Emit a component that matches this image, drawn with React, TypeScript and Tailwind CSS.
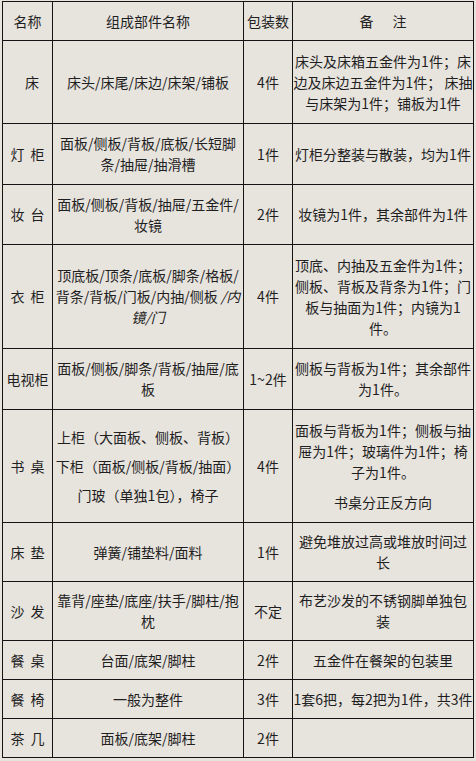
import React from "react";

type Row = {
  name: string;
  namePad?: boolean;
  parts: React.ReactNode[];
  partsGap?: boolean;
  count: string;
  notes: React.ReactNode[];
  notesExtra?: string;
};

const rows: Row[] = [
  {
    name: "床",
    namePad: true,
    parts: ["床头/床尾/床边/床架/铺板"],
    count: "4件",
    notes: ["床头及床箱五金件为1件；床", "边及床边五金件为1件； 床抽", "与床架为1件；铺板为1件"],
  },
  {
    name: "灯 柜",
    parts: ["面板/侧板/背板/底板/长短脚", "条/抽屉/抽滑槽"],
    count: "1件",
    notes: ["灯柜分整装与散装，均为1件"],
  },
  {
    name: "妆 台",
    parts: ["面板/侧板/背板/抽屉/五金件/", "妆镜"],
    count: "2件",
    notes: ["妆镜为1件，其余部件为1件"],
  },
  {
    name: "衣 柜",
    parts: [
      "顶底板/顶条/底板/脚条/格板/",
      <>
        背条/背板/门板/内抽/侧板 <i>/内</i>
      </>,
      <i>镜/门</i>,
    ],
    count: "4件",
    notes: ["顶底、内抽及五金件为1件；", "侧板、背板及背条为1件；门", "板与抽面为1件；内镜为1", "件。"],
  },
  {
    name: "电视柜",
    parts: ["面板/侧板/脚条/背板/抽屉/底", "板"],
    count: "1~2件",
    notes: ["侧板与背板为1件；其余部件", "为1件。"],
  },
  {
    name: "书 桌",
    parts: ["上柜（大面板、侧板、背板）", "下柜（面板/侧板/背板/抽面）", "门玻（单独1包），椅子"],
    partsGap: true,
    count: "4件",
    notes: ["面板与背板为1件；侧板与抽", "屉为1件；玻璃件为1件；椅", "子为1件。"],
    notesExtra: "书桌分正反方向",
  },
  {
    name: "床 垫",
    parts: ["弹簧/铺垫料/面料"],
    count: "1件",
    notes: ["避免堆放过高或堆放时间过", "长"],
  },
  {
    name: "沙 发",
    parts: ["靠背/座垫/底座/扶手/脚柱/抱", "枕"],
    count: "不定",
    notes: ["布艺沙发的不锈钢脚单独包", "装"],
  },
  {
    name: "餐 桌",
    parts: ["台面/底架/脚柱"],
    count: "2件",
    notes: ["五金件在餐架的包装里"],
  },
  {
    name: "餐 椅",
    parts: ["一般为整件"],
    count: "3件",
    notes: ["1套6把，每2把为1件，共3件"],
  },
  {
    name: "茶 几",
    parts: ["面板/底架/脚柱"],
    count: "2件",
    notes: [],
  },
];

const cell = "bg-[#e7e3dd] flex flex-col items-center justify-center text-center whitespace-nowrap overflow-visible";

function Name({ name, pad }: { name: string; pad?: boolean }) {
  const pieces = name.split(" ");
  return (
    <div className={`${cell} ${pad ? "pl-[9px]" : ""}`}>
      <div className="flex flex-row gap-[6px]">
        {pieces.map((p, i) => (
          <span key={i}>{p}</span>
        ))}
      </div>
    </div>
  );
}

export default function App() {
  return (
    <div className="w-[476px] h-[761px] bg-[#e7e3dd] pt-[1px] pl-[2px] font-['Noto_Sans_CJK_SC','Noto_Sans',sans-serif] text-[14px] leading-[21px] text-[#1f1f1f]">
      <div className="w-[472px] grid grid-cols-[49px_190px_48px_180px] grid-rows-[38px_82px_60px_59px_103px_60px_112px_58px_58px_38px_38px_38px] gap-px p-px bg-[#141414]">
        <div className={cell}>名称</div>
        <div className={cell}>组成部件名称</div>
        <div className={cell}>包装数</div>
        <div className={cell}>
          <div className="flex flex-row gap-[19px]">
            <span>备</span>
            <span>注</span>
          </div>
        </div>
        {rows.map((r, i) => (
          <React.Fragment key={i}>
            <Name name={r.name} pad={r.namePad} />
            <div className={`${cell} ${r.partsGap ? "gap-[8px]" : ""}`}>
              {r.parts.map((p, j) => (
                <div key={j}>{p}</div>
              ))}
            </div>
            <div className={cell}>{r.count}</div>
            <div className={cell}>
              {r.notes.map((n, j) => (
                <div key={j}>{n}</div>
              ))}
              {r.notesExtra && <div className="mt-[9px]">{r.notesExtra}</div>}
            </div>
          </React.Fragment>
        ))}
      </div>
    </div>
  );
}
